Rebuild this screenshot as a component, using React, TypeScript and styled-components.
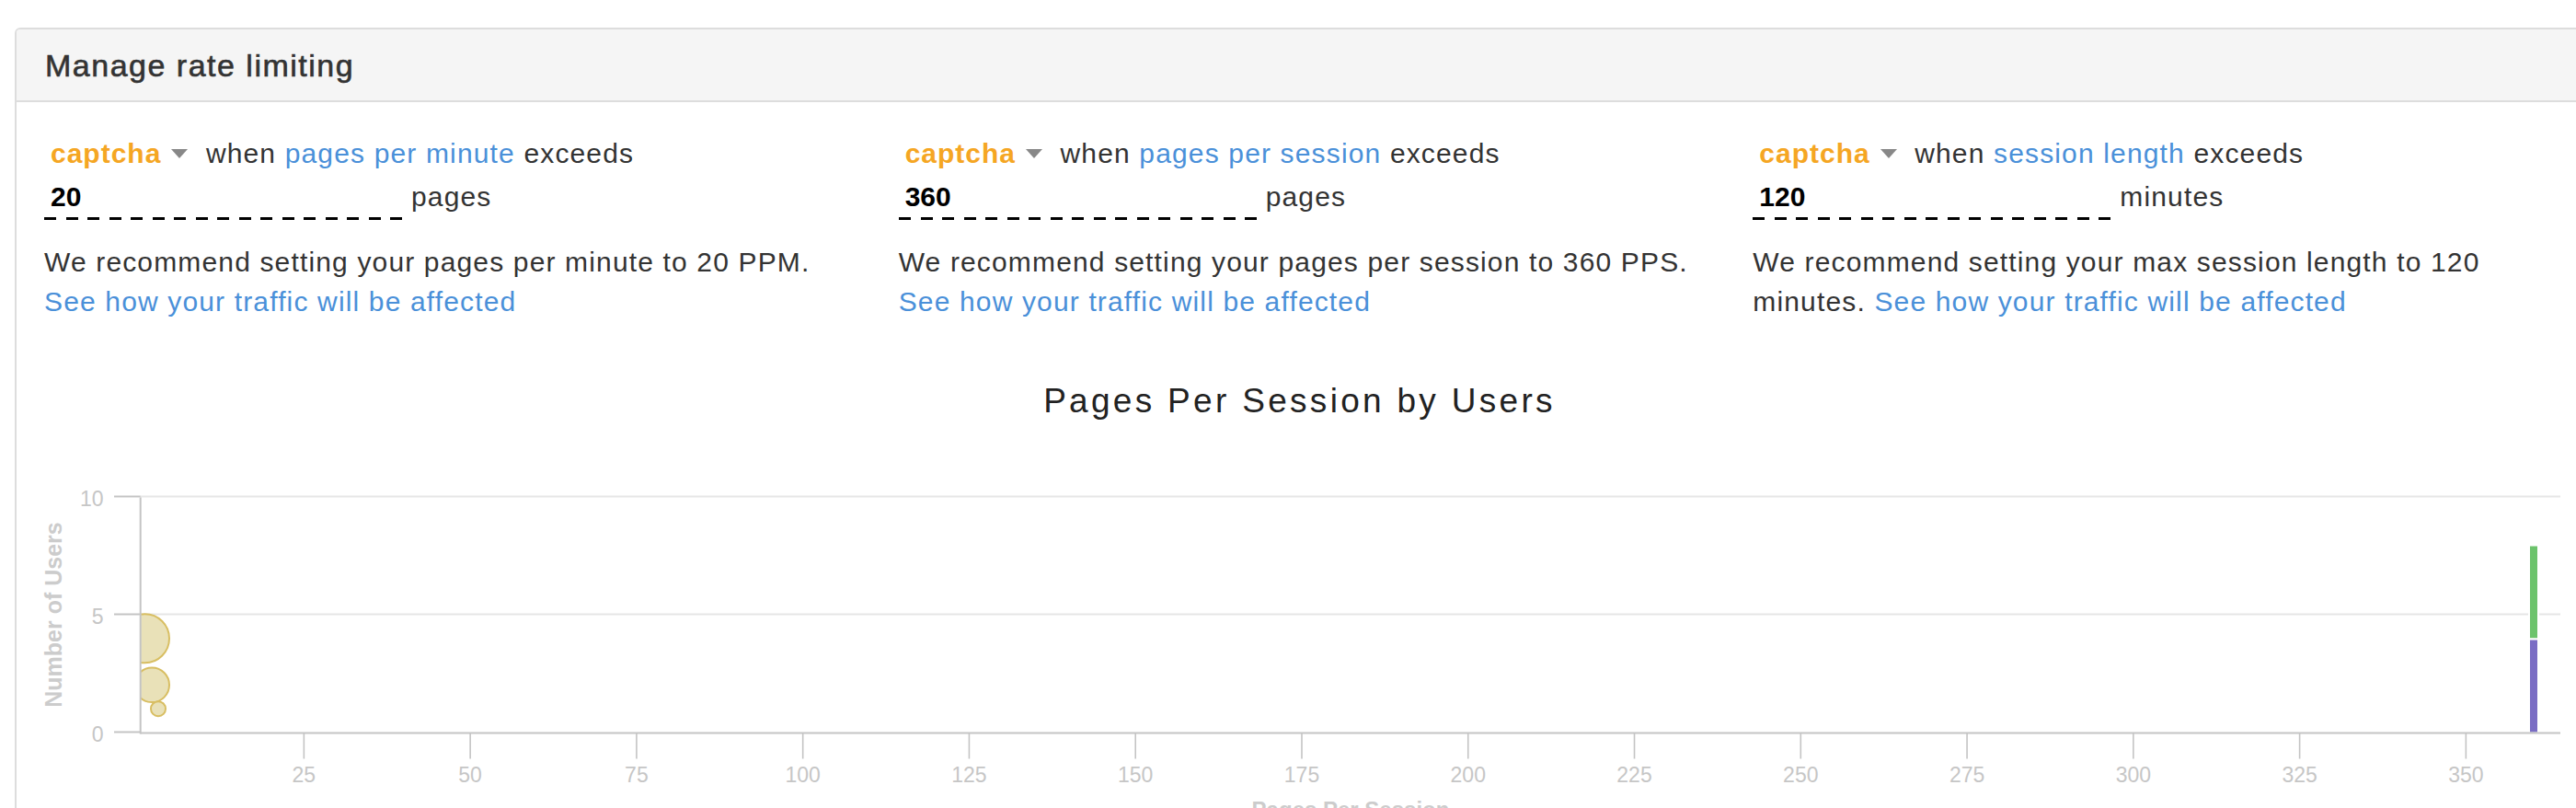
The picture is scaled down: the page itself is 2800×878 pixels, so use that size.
import React from "react";
import styled, { createGlobalStyle } from "styled-components";

const GlobalStyle = createGlobalStyle`
  html, body {
    margin: 0;
    padding: 0;
    background: #ffffff;
    overflow: hidden;
  }
  body {
    font-family: "Liberation Sans", Arial, Helvetica, sans-serif;
    color: #333333;
  }
`;

const Page = styled.div`
  width: 2800px;
  height: 878px;
  box-sizing: border-box;
  padding: 30px 0 0 16px;
  overflow: hidden;
`;

const Panel = styled.section`
  width: 2790px;
  min-height: 900px;
  box-sizing: border-box;
  border: 2px solid #dddddd;
  border-radius: 6px;
  background: #ffffff;
`;

const PanelHeading = styled.header`
  height: 77px;
  display: flex;
  align-items: center;
  padding: 0 31px;
  background: #f5f5f5;
  border-bottom: 2px solid #dddddd;
  border-radius: 4px 4px 0 0;
`;

const PanelTitle = styled.h3`
  margin: 0;
  font-size: 34px;
  line-height: 1;
  font-weight: 400;
  letter-spacing: 1.5px;
  color: #333333;
  -webkit-text-stroke: 0.6px #333333;
`;

const PanelBody = styled.div`
  padding: 34px 30px 0;
`;

const RuleGrid = styled.div`
  display: grid;
  grid-template-columns: repeat(3, 1fr);
  column-gap: 60px;
`;

const RuleColumn = styled.div`
  font-size: 30px;
  letter-spacing: 1.15px;
  line-height: 43px;
`;

const ConditionLine = styled.div`
  white-space: nowrap;
`;

const Action = styled.span`
  padding-left: 7px;
  color: #f5a623;
  font-weight: 700;
  letter-spacing: 1px;
  cursor: pointer;
`;

const Caret = styled.span`
  display: inline-block;
  width: 0;
  height: 0;
  margin: 0 10px 5px 11px;
  border-left: 9px solid transparent;
  border-right: 9px solid transparent;
  border-top: 10px solid #888888;
`;

const Link = styled.a`
  color: #4a90d9;
  text-decoration: none;
  cursor: pointer;
`;

const ThresholdRow = styled.div`
  display: flex;
  align-items: baseline;
  margin-top: 4px;
`;

const ThresholdInput = styled.input`
  width: 390px;
  height: 42px;
  box-sizing: border-box;
  margin: 0;
  padding: 0 7px 8px;
  border: 0;
  outline: none;
  font-family: "Liberation Sans", Arial, sans-serif;
  font-size: 30px;
  line-height: 34px;
  font-weight: 700;
  color: #000000;
  background: repeating-linear-gradient(
      to right,
      #000000 0 13px,
      transparent 13px 23.5px
    )
    left bottom / 100% 3px no-repeat;
`;

const Unit = styled.span`
  margin-left: 9px;
`;

const Recommendation = styled.p`
  margin: 24px 0 0;
`;

const ChartTitle = styled.h2`
  margin: 64px 0 0;
  padding-left: 3px;
  font-size: 37px;
  line-height: 46px;
  font-weight: 400;
  letter-spacing: 3.3px;
  text-align: center;
  color: #222222;
`;

const ChartFrame = styled.div`
  margin: 0 -30px;
`;

const ChartSvg = styled.svg`
  display: block;
  width: 2786px;
  height: 440px;
  font-family: "Liberation Sans", Arial, sans-serif;
`;

type Rule = {
  metric: string;
  value: string;
  unit: string;
  text: string;
};

const rules: Rule[] = [
  {
    metric: "pages per minute",
    value: "20",
    unit: "pages",
    text: "We recommend setting your pages per minute to 20 PPM.",
  },
  {
    metric: "pages per session",
    value: "360",
    unit: "pages",
    text: "We recommend setting your pages per session to 360 PPS.",
  },
  {
    metric: "session length",
    value: "120",
    unit: "minutes",
    text: "We recommend setting your max session length to 120 minutes.",
  },
];

const RuleCard: React.FC<{ rule: Rule }> = ({ rule }) => (
  <RuleColumn>
    <ConditionLine>
      <Action>captcha</Action>
      <Caret />
      {" when "}
      <Link>{rule.metric}</Link>
      {" exceeds"}
    </ConditionLine>
    <ThresholdRow>
      <ThresholdInput readOnly value={rule.value} />
      <Unit>{rule.unit}</Unit>
    </ThresholdRow>
    <Recommendation>
      {rule.text} <Link>See how your traffic will be affected</Link>
    </Recommendation>
  </RuleColumn>
);

const AXIS = "#c4c4c4";
const GRID = "#e6e6e6";
const LABEL = "#c6c6c6";

const plotLeft = 152.7;
const plotRight = 2783;
const yOf = (v: number) => 795 - 25.6 * v;
const xOf = (v: number) => 149.6 + 7.2308 * v;

const xTicks = [25, 50, 75, 100, 125, 150, 175, 200, 225, 250, 275, 300, 325, 350];
const yTicks = [10, 5, 0];

const bubbles = [
  { cx: 157.5, cy: 692.3, r: 26.5 },
  { cx: 165.2, cy: 742.8, r: 18.8 },
  { cx: 172, cy: 768.7, r: 8 },
];

const Chart: React.FC = () => (
  <ChartSvg viewBox="18 457.5 2786 440" xmlns="http://www.w3.org/2000/svg">
    <defs>
      <clipPath id="plot-area">
        <rect x={plotLeft} y={520} width={plotRight - plotLeft} height={276} />
      </clipPath>
    </defs>

    {[10, 5].map((v) => (
      <line
        key={`g${v}`}
        x1={plotLeft}
        x2={plotRight}
        y1={yOf(v) - 1}
        y2={yOf(v) - 1}
        stroke={GRID}
        strokeWidth={2}
      />
    ))}

    <g clipPath="url(#plot-area)">
      {bubbles.map((b, i) => (
        <circle
          key={i}
          cx={b.cx}
          cy={b.cy}
          r={b.r}
          fill="#e9e1b8"
          stroke="#d8be62"
          strokeWidth={2}
        />
      ))}
      <rect x={2749} y={591} width={10} height={102} fill="#6cc36c" stroke="#ffffff" strokeWidth={2} />
      <rect x={2749} y={693} width={10} height={102} fill="#7a6dc4" stroke="#ffffff" strokeWidth={2} />
    </g>

    <line x1={plotLeft} x2={plotLeft} y1={539} y2={796} stroke={AXIS} strokeWidth={2} />
    {yTicks.map((v) => (
      <line
        key={`yt${v}`}
        x1={124}
        x2={plotLeft}
        y1={yOf(v) - 1}
        y2={yOf(v) - 1}
        stroke={AXIS}
        strokeWidth={2}
      />
    ))}
    <line x1={plotLeft} x2={plotRight} y1={795} y2={795} stroke={AXIS} strokeWidth={2} />
    {xTicks.map((v) => (
      <line
        key={`xt${v}`}
        x1={xOf(v)}
        x2={xOf(v)}
        y1={795}
        y2={823}
        stroke={AXIS}
        strokeWidth={1.6}
      />
    ))}

    {xTicks.map((v) => (
      <text key={`xl${v}`} x={xOf(v)} y={848} textAnchor="middle" fontSize={23} fill={LABEL}>
        {v}
      </text>
    ))}
    {yTicks.map((v) => (
      <text key={`yl${v}`} x={112.5} y={yOf(v) + 9} textAnchor="end" fontSize={23} fill={LABEL}>
        {v}
      </text>
    ))}

    <text
      x={67}
      y={666.5}
      textAnchor="middle"
      fontSize={25}
      fontWeight={700}
      fill="#cccccc"
      transform="rotate(-90 67 666.5)"
    >
      Number of Users
    </text>
    <text x={1468} y={886} textAnchor="middle" fontSize={24} fontWeight={700} fill="#cccccc">
      Pages Per Session
    </text>
  </ChartSvg>
);

export default function App() {
  return (
    <>
      <GlobalStyle />
      <Page>
        <Panel>
          <PanelHeading>
            <PanelTitle>Manage rate limiting</PanelTitle>
          </PanelHeading>
          <PanelBody>
            <RuleGrid>
              {rules.map((r) => (
                <RuleCard key={r.metric} rule={r} />
              ))}
            </RuleGrid>
            <ChartTitle>Pages Per Session by Users</ChartTitle>
            <ChartFrame>
              <Chart />
            </ChartFrame>
          </PanelBody>
        </Panel>
      </Page>
    </>
  );
}
